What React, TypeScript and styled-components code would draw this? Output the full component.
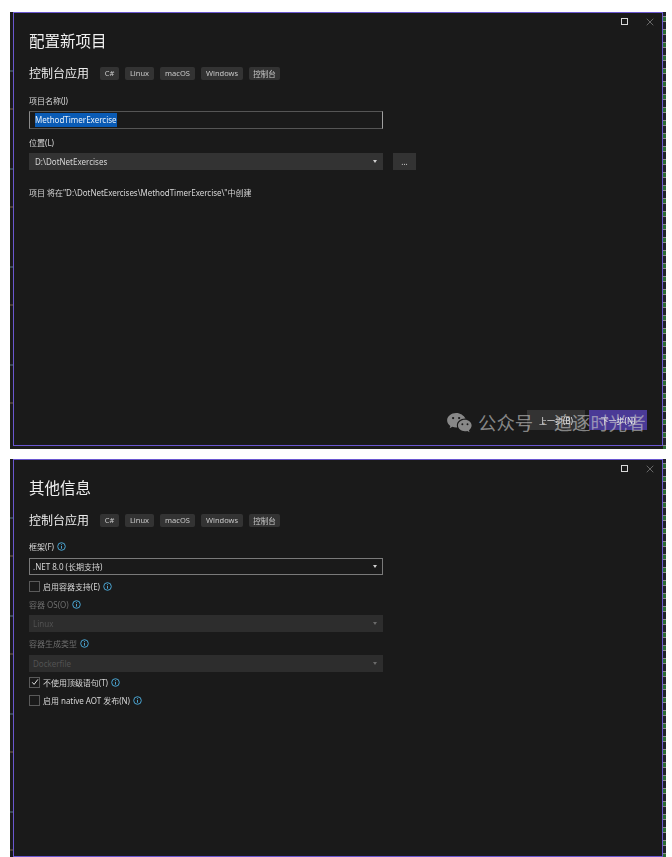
import styled, { createGlobalStyle } from "styled-components";
import { X } from "lucide-react";

const GlobalStyle = createGlobalStyle`
    html, body {
        margin: 0;
        padding: 0;
        background: #ffffff;
    }
    body {
        font-family: "Noto Sans", "Noto Sans CJK SC", sans-serif;
    }
`;

const Page = styled.div`
    width: 672px;
    height: 857px;
    overflow: hidden;
    padding: 12px 0 0 10px;
    box-sizing: border-box;
    display: flex;
    flex-direction: column;
    gap: 10px;
`;

// one captured dialog, with the slivers of the IDE behind it on both sides
const Shot = styled.div<{ $height: number }>`
    width: 656px;
    height: ${(p) => p.$height}px;
    flex: none;
    display: flex;
    background: #1c1c1c;
`;

const LeftSliver = styled.div`
    width: 3px;
    background: repeating-linear-gradient(
        180deg,
        #1b1b1b 0 58px,
        #3a4a50 58px 60px,
        #1b1b1b 60px 96px,
        #4a4032 96px 98px
    );
`;

const RightSliver = styled.div`
    width: 3px;
    background: repeating-linear-gradient(
        180deg,
        #20242a 0 4px,
        #8a8a8a 4px 5px,
        #2b6b35 5px 9px,
        #8a8a8a 9px 10px,
        #20242a 10px 13px
    );
`;

const Window = styled.div<{ $height: number }>`
    position: relative;
    flex: 1;
    height: ${(p) => p.$height}px;
    box-sizing: border-box;
    border: 1px solid #6a57d0;
    background: #1a1a1a;
    color: #e6e6e6;
`;

// the source picture is a scaled-down capture, so its contents are a little soft
const Body = styled.div`
    height: 100%;
    box-sizing: border-box;
    padding: 0 15px;
    display: flex;
    flex-direction: column;
    filter: blur(0.3px);
`;

const WindowControls = styled.div`
    display: flex;
    justify-content: flex-end;
    align-items: center;
    gap: 16px;
    height: 17px;
    padding: 0 6px 0 0;
    margin-right: -15px;
    color: #a8a8a8;
`;

const MaximizeIcon = styled.span`
    width: 7px;
    height: 7px;
    box-sizing: border-box;
    border: 1px solid #d8d8d8;
`;

const Title = styled.h1`
    margin: 0;
    font-size: 15.5px;
    line-height: 22px;
    font-weight: 400;
    color: #f0f0f0;
`;

const TemplateRow = styled.div`
    display: flex;
    align-items: center;
    gap: 6px;
    margin-top: 11px;
    height: 20px;
`;

const TemplateName = styled.span`
    font-size: 12px;
    width: 65px;
    color: #ededed;
`;

const Tag = styled.span<{ $width: number }>`
    width: ${(p) => p.$width}px;
    height: 13px;
    border-radius: 2px;
    background: #333333;
    color: #c9c9c9;
    font-size: 7.5px;
    display: flex;
    align-items: center;
    justify-content: center;
`;

const Label = styled.div<{ $disabled?: boolean; $top: number }>`
    display: flex;
    align-items: center;
    gap: 3px;
    margin-top: ${(p) => p.$top}px;
    height: 12px;
    font-size: 8px;
    color: ${(p) => (p.$disabled ? "#6e6e6e" : "#d6d6d6")};
`;

const TextInput = styled.div`
    width: 354px;
    height: 18px;
    margin-top: 5px;
    box-sizing: border-box;
    border: 1px solid #555555;
    border-right-color: #a0a0a0;
    border-left-color: #8a8a8a;
    padding-left: 5px;
    display: flex;
    align-items: center;
    font-size: 8px;
`;

const Selected = styled.span`
    background: #0a5bb5;
    color: #e8f0fa;
    line-height: 14px;
`;

const FieldRow = styled.div`
    display: flex;
    gap: 10px;
`;

const Select = styled.div<{ $variant?: "outlined" | "disabled"; $top: number }>`
    width: 354px;
    height: 17px;
    margin-top: ${(p) => p.$top}px;
    box-sizing: border-box;
    padding: 0 5px 0 ${(p) => (p.$variant ? 3 : 5)}px;
    display: flex;
    align-items: center;
    justify-content: space-between;
    font-size: 8px;
    background: ${(p) =>
        p.$variant === "outlined"
            ? "transparent"
            : p.$variant === "disabled"
            ? "#2d2d2d"
            : "#333333"};
    border: 1px solid ${(p) => (p.$variant === "outlined" ? "#7a7a7a" : "transparent")};
    color: ${(p) => (p.$variant === "disabled" ? "#525252" : "#d6d6d6")};
`;

const Caret = styled.span<{ $dim?: boolean }>`
    width: 0;
    height: 0;
    border-left: 2px solid transparent;
    border-right: 2px solid transparent;
    border-top: 3px solid ${(p) => (p.$dim ? "#6a6a6a" : "#d0d0d0")};
`;

const BrowseButton = styled.div`
    width: 23px;
    height: 17px;
    margin-top: 5px;
    background: #333333;
    color: #d6d6d6;
    font-size: 8px;
    display: flex;
    align-items: center;
    justify-content: center;
`;

const Hint = styled.div`
    margin-top: 17px;
    font-size: 8px;
    letter-spacing: -0.04px;
    line-height: 12px;
    color: #d6d6d6;
`;

const CheckRow = styled.div<{ $top: number }>`
    display: flex;
    align-items: center;
    gap: 3px;
    margin-top: ${(p) => p.$top}px;
    height: 12px;
    font-size: 8px;
    letter-spacing: -0.03px;
    color: #d6d6d6;
`;

const CheckBox = styled.span`
    width: 9px;
    height: 9px;
    border: 1px solid #5a5a5a;
    display: flex;
    align-items: center;
    justify-content: center;
`;

const Footer = styled.div`
    margin-top: auto;
    margin-bottom: 15px;
    display: flex;
    justify-content: flex-end;
    gap: 4px;
`;

const FooterButton = styled.div<{ $primary?: boolean }>`
    width: 58px;
    height: 20px;
    background: ${(p) => (p.$primary ? "#4a3a96" : "#333333")};
    color: #f0f0f0;
    font-size: 8px;
    display: flex;
    align-items: center;
    justify-content: center;
`;

const Watermark = styled.div`
    position: absolute;
    left: 433px;
    top: 398px;
    display: flex;
    align-items: center;
    gap: 6px;
    font-size: 18.4px;
    line-height: 24px;
    word-spacing: 3px;
    color: rgba(205, 205, 205, 0.62);
    white-space: nowrap;
`;

const InfoIcon = () => (
    <svg width="9" height="9" viewBox="0 0 9 9">
        <circle cx="4.5" cy="4.5" r="3.8" fill="none" stroke="#4aa3d0" strokeWidth="1" />
        <path d="M4.5 2.2v.9M4.5 3.9v2.8" stroke="#4aa3d0" strokeWidth="1" />
    </svg>
);

const CheckMark = () => (
    <svg width="8" height="8" viewBox="0 0 8 8">
        <path d="M1.2 4.3 3.1 6.4 6.9 1.4" fill="none" stroke="#e6e6e6" strokeWidth="1" />
    </svg>
);

const WeChatLogo = () => (
    <svg width="25" height="20" viewBox="0 0 26 21" fill="rgba(205,205,205,0.62)">
        <path d="M9.5 0C4.3 0 0 3.4 0 7.7c0 2.4 1.3 4.5 3.4 5.9L2.6 16l2.9-1.5c1.2.4 2.6.7 4 .7.4 0 .7 0 1.1-.1-.2-.7-.4-1.400-.4-2.100 0-4 3.800-7.100 8.500-7.100h.7C17.400 2.400 13.800 0 9.500 0z" />
        <path d="M18.700 7.200c-4 0-7.300 2.700-7.300 6 0 3.300 3.300 6 7.300 6 .9 0 1.700-.1 2.500-.4l2.400 1.300-.7-2.100c1.700-1.100 2.800-2.900 2.800-4.800 0-3.300-3.200-6-7-6z" />
        <circle cx="6.300" cy="5.300" r="1.200" fill="#1a1a1a" />
        <circle cx="12.600" cy="5.300" r="1.200" fill="#1a1a1a" />
        <circle cx="16" cy="11.800" r="1" fill="#1a1a1a" />
        <circle cx="21.400" cy="11.800" r="1" fill="#1a1a1a" />
    </svg>
);

const tags = [
    { name: "C#", width: 19 },
    { name: "Linux", width: 29 },
    { name: "macOS", width: 35 },
    { name: "Windows", width: 42 },
    { name: "控制台", width: 31 },
];

const Controls = () => (
    <WindowControls>
        <MaximizeIcon />
        <X size={12} strokeWidth={1.1} />
    </WindowControls>
);

const TemplateInfo = () => (
    <TemplateRow>
        <TemplateName>控制台应用</TemplateName>
        {tags.map((tag) => (
            <Tag key={tag.name} $width={tag.width}>
                {tag.name}
            </Tag>
        ))}
    </TemplateRow>
);

const App = () => {
    return (
        <Page>
            <GlobalStyle />
            <Shot $height={437}>
                <LeftSliver />
                <Window $height={434}>
                    <Body>
                        <Controls />
                        <Title>配置新项目</Title>
                        <TemplateInfo />
                        <Label $top={11}>项目名称(J)</Label>
                        <TextInput>
                            <Selected>MethodTimerExercise</Selected>
                        </TextInput>
                        <Label $top={7}>位置(L)</Label>
                        <FieldRow>
                            <Select $top={5}>
                                D:\DotNetExercises
                                <Caret />
                            </Select>
                            <BrowseButton>...</BrowseButton>
                        </FieldRow>
                        <Hint>项目 将在"D:\DotNetExercises\MethodTimerExercise\"中创建</Hint>
                        <Footer>
                            <FooterButton>上一步(B)</FooterButton>
                            <FooterButton $primary>下一步(N)</FooterButton>
                        </Footer>
                    </Body>
                    <Watermark>
                        <WeChatLogo />
                        公众号 · 追逐时光者
                    </Watermark>
                </Window>
                <RightSliver />
            </Shot>
            <Shot $height={398}>
                <LeftSliver />
                <Window $height={398}>
                    <Body>
                        <Controls />
                        <Title>其他信息</Title>
                        <TemplateInfo />
                        <Label $top={10}>
                            框架(F) <InfoIcon />
                        </Label>
                        <Select $variant="outlined" $top={6}>
                            .NET 8.0 (长期支持)
                            <Caret />
                        </Select>
                        <CheckRow $top={5}>
                            <CheckBox />
                            启用容器支持(E) <InfoIcon />
                        </CheckRow>
                        <Label $disabled $top={6}>
                            容器 OS(O) <InfoIcon />
                        </Label>
                        <Select $variant="disabled" $top={5}>
                            Linux
                            <Caret $dim />
                        </Select>
                        <Label $disabled $top={5}>
                            容器生成类型 <InfoIcon />
                        </Label>
                        <Select $variant="disabled" $top={6}>
                            Dockerfile
                            <Caret $dim />
                        </Select>
                        <CheckRow $top={4}>
                            <CheckBox>
                                <CheckMark />
                            </CheckBox>
                            不使用顶级语句(T) <InfoIcon />
                        </CheckRow>
                        <CheckRow $top={6}>
                            <CheckBox />
                            启用 native AOT 发布(N) <InfoIcon />
                        </CheckRow>
                    </Body>
                </Window>
                <RightSliver />
            </Shot>
        </Page>
    );
};

export default App;
